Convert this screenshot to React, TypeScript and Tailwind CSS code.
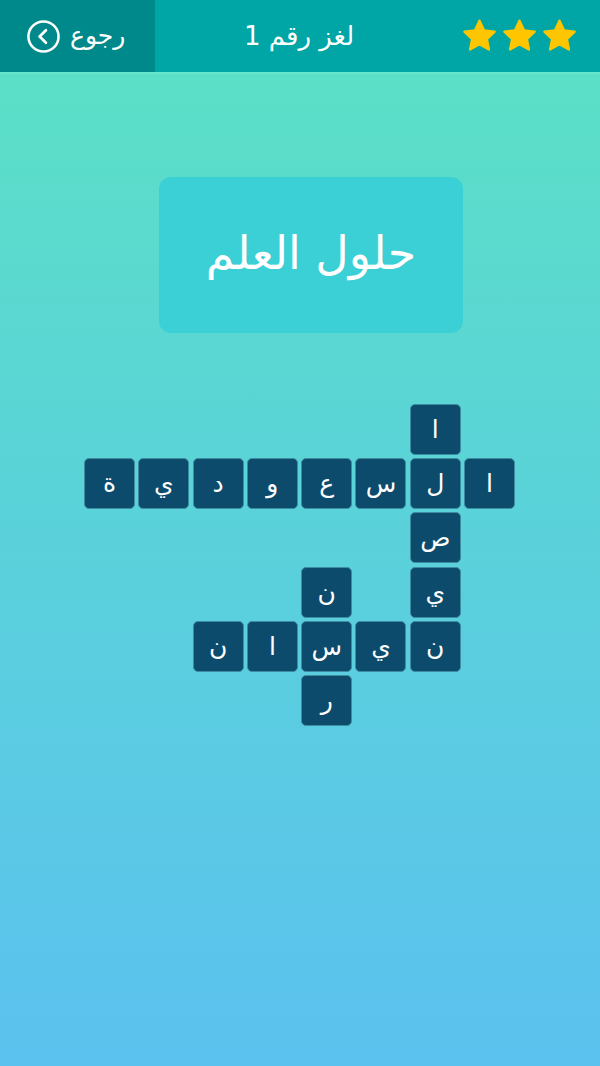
import React from "react";

const rows: (string | null)[][] = [
  [null, null, null, null, null, null, "ا", null],
  ["ة", "ي", "د", "و", "ع", "س", "ل", "ا"],
  [null, null, null, null, null, null, "ص", null],
  [null, null, null, null, "ن", null, "ي", null],
  [null, null, "ن", "ا", "س", "ي", "ن", null],
  [null, null, null, null, "ر", null, null, null],
];

function Star() {
  return (
    <svg width="37" height="36" viewBox="0 0 24 24">
      <path
        d="M12 1.8l3.05 6.5 7.05.85-5.2 4.85 1.37 6.98L12 17.5l-6.27 3.48 1.37-6.98-5.2-4.85 7.05-.85z"
        fill="#ffc600"
        stroke="#ffc600"
        strokeWidth="1.6"
        strokeLinejoin="round"
      />
    </svg>
  );
}

export default function App() {
  const font = { fontFamily: '"DejaVu Sans", "Noto Sans", sans-serif' };
  return (
    <div
      className="w-[600px] h-[1066px] flex flex-col bg-gradient-to-b from-[#5be1c3] to-[#5bc1ef]"
      style={font}
    >
      <div className="h-[72px] flex bg-[#00a5a6] shrink-0">
        <div className="w-[155px] h-full bg-[#00898a] flex items-center pl-[26px] gap-[9px]">
          <svg width="35" height="35" viewBox="0 0 36 36">
            <circle cx="18" cy="18" r="15.5" fill="none" stroke="white" strokeWidth="2.6" />
            <path d="M20.5 11.5L14 18l6.5 6.5" fill="none" stroke="white" strokeWidth="2.8" strokeLinecap="round" strokeLinejoin="round" />
          </svg>
          <span className="text-white text-[25px] leading-none pb-[2px]" dir="rtl">رجوع</span>
        </div>
        <div className="flex-1 flex items-center justify-center pr-[18px]">
          <span className="text-white text-[26px] leading-none" dir="rtl">لغز رقم 1</span>
        </div>
        <div className="flex items-center gap-[3px] pr-[22px]">
          <Star />
          <Star />
          <Star />
        </div>
      </div>
      <div className="h-[2px] bg-[#66e6cb]" />
      <div className="flex flex-col pt-[103px]">
        <div className="ml-[159px] w-[304px] h-[156px] rounded-[12px] bg-[#3bcfd6] flex items-center justify-center">
          <span className="text-white text-[46px] leading-none pb-[4px]" dir="rtl">حلول العلم</span>
        </div>
        <div className="ml-[84px] mt-[71px] grid grid-cols-[repeat(8,51px)] auto-rows-[51px] gap-x-[3.3px] gap-y-[3.2px] w-max">
          {rows.flatMap((r, ri) =>
            r.map((c, ci) =>
              c ? (
                <div
                  key={`${ri}-${ci}`}
                  className="rounded-[5px] bg-[#0d4b6d] border border-[#3d8ca0] flex items-center justify-center text-white text-[25px] leading-none"
                >
                  {c}
                </div>
              ) : (
                <div key={`${ri}-${ci}`} />
              )
            )
          )}
        </div>
      </div>
    </div>
  );
}
